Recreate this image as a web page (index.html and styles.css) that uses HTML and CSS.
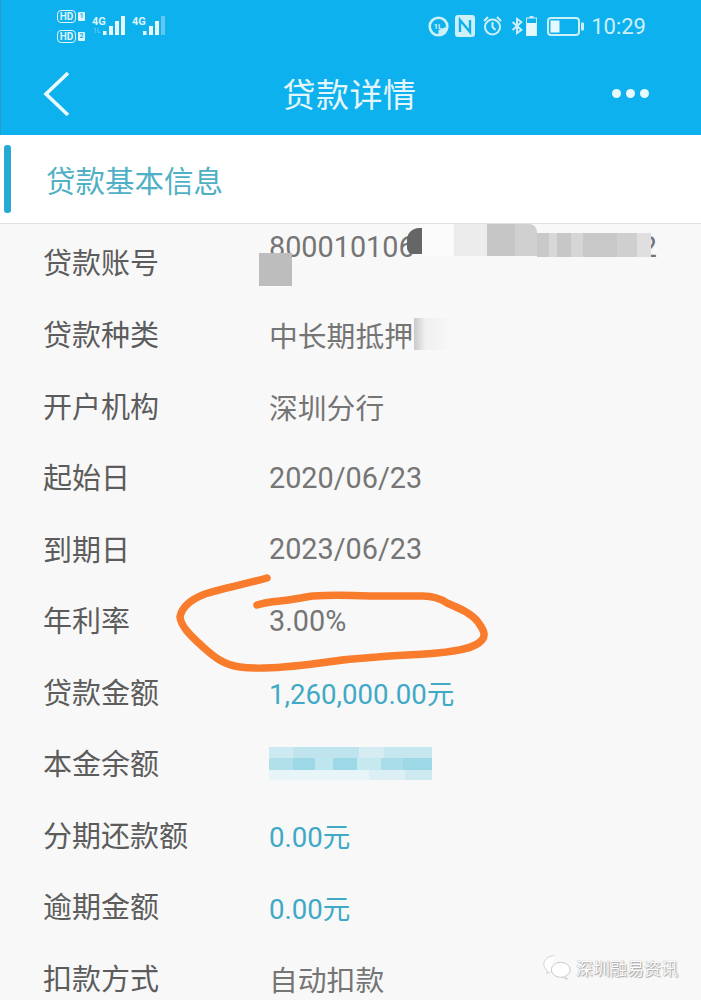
FILE: index.html
```html
<!DOCTYPE html>
<html lang="zh-CN">
<head>
    <meta charset="UTF-8">
    <meta name="viewport" content="width=device-width, initial-scale=1.0">
    <title>贷款详情</title>
    <link rel="stylesheet" href="styles.css">
</head>
<body>
    <div class="page">
        <!-- Status bar + title bar -->
        <header class="topbar">
            <div class="status">
                <div class="status-left">
                    <div class="hd-col">
                        <div class="hd-line"><span class="hd">HD</span><span class="sim">1</span></div>
                        <div class="hd-line"><span class="hd">HD</span><span class="sim">2</span></div>
                    </div>
                    <div class="signal">
                        <span class="net">4G</span>
                        <svg width="22" height="19" viewBox="0 0 22 19"><g fill="#e6f7fb"><rect x="0" y="15" width="3.500" height="4"/><rect x="6" y="10" width="4" height="9"/><rect x="12" y="5" width="4" height="14"/><rect x="18" y="0" width="4" height="19"/></g></svg>
                        <span class="net-sub">1L</span>
                    </div>
                    <div class="signal">
                        <span class="net">4G</span>
                        <svg width="22" height="19" viewBox="0 0 22 19"><rect x="0" y="15" width="3.500" height="4" fill="#e6f7fb"/><rect x="6" y="10" width="4" height="9" fill="#e6f7fb"/><rect x="12" y="5" width="4" height="14" fill="#e6f7fb"/><rect x="18" y="0" width="4" height="19" fill="#62c7ee"/></svg>
                    </div>
                </div>
                <div class="status-right">
                    <svg class="ic-eye" width="21" height="21" viewBox="0 0 21 21"><circle cx="10.500" cy="10.500" r="8.800" fill="none" stroke="#cdeff8" stroke-width="2.600"/><path d="M10.500 19.500a9 9 0 0 0 9-9l-9 3.500z" fill="#cdeff8"/><text x="5.500" y="13" font-size="8" font-weight="bold" fill="#cdeff8" font-family="Roboto, sans-serif">1L</text></svg>
                    <svg class="ic-nfc" width="20" height="22" viewBox="0 0 20 22"><rect width="20" height="22" rx="3" fill="#cdeff8"/><path d="M5 17V5l10 12V5" fill="none" stroke="#0db1ee" stroke-width="2.400"/></svg>
                    <svg class="ic-alarm" width="19" height="22" viewBox="0 0 19 22"><circle cx="9.500" cy="12" r="7.500" fill="none" stroke="#cdeff8" stroke-width="2"/><path d="M9.500 7v5l3 3M1 6l4-4M18 6l-4-4" fill="none" stroke="#cdeff8" stroke-width="2"/></svg>
                    <svg class="ic-bt" width="12" height="22" viewBox="0 0 15 22"><path d="M2 6l11 10-5.500 4V2L13 6 2 16" fill="none" stroke="#cdeff8" stroke-width="2.400"/></svg>
                    <svg class="ic-mini" width="11" height="20" viewBox="0 0 11 20"><rect x="3.500" y="0" width="4" height="2" fill="#cdeff8"/><rect x="0.500" y="2" width="10" height="17.500" fill="none" stroke="#cdeff8"/><rect x="1" y="7" width="9" height="12.500" fill="#e6f8fc"/></svg>
                    <svg class="ic-battery" width="37" height="19" viewBox="0 0 37 19"><rect x="1" y="1" width="31" height="17" rx="3" fill="none" stroke="#cdeff8" stroke-width="2"/><rect x="3.500" y="3.500" width="9" height="12" fill="#e6f8fc"/><rect x="34" y="5.500" width="3" height="8" rx="1" fill="#cdeff8"/></svg>
                    <span class="clock">10:29</span>
                </div>
            </div>
            <nav class="titlebar">
                <svg class="back" width="28" height="46" viewBox="0 0 28 46"><path d="M25 2L3 23l22 21" fill="none" stroke="#ecf9fd" stroke-width="3.600"/></svg>
                <h1 class="title">贷款详情</h1>
                <div class="more"><i></i><i></i><i></i></div>
            </nav>
        </header>

        <section class="section-head">
            <span class="marker"></span>
            <h2>贷款基本信息</h2>
        </section>

        <div class="rows">
            <div class="row row-first">
                <span class="label">贷款账号</span>
                <div class="value account">
                    <div class="account-line"><span>800010106</span><span>52</span></div>
                    <span class="mask mask-light"></span>
                    <span class="mask mask-dark"></span>
                    <span class="mask mask-grey"></span>
                    <span class="mask mask-stripes"></span>
                    <span class="mask mask-square"></span>
                </div>
            </div>
            <div class="row"><span class="label">贷款种类</span><span class="value">中长期抵押<span class="mask mask-type"></span></span></div>
            <div class="row"><span class="label">开户机构</span><span class="value">深圳分行</span></div>
            <div class="row"><span class="label">起始日</span><span class="value">2020/06/23</span></div>
            <div class="row"><span class="label">到期日</span><span class="value">2023/06/23</span></div>
            <div class="row"><span class="label">年利率</span><span class="value">3.00%</span></div>
            <div class="row"><span class="label">贷款金额</span><span class="value money">1,260,000.00元</span></div>
            <div class="row"><span class="label">本金余额</span><span class="value"><span class="mask-blue"></span></span></div>
            <div class="row"><span class="label">分期还款额</span><span class="value money">0.00元</span></div>
            <div class="row"><span class="label">逾期金额</span><span class="value money">0.00元</span></div>
            <div class="row"><span class="label">扣款方式</span><span class="value">自动扣款</span></div>
        </div>

        <!-- hand drawn circle around the rate -->
        <svg class="scribble" width="701" height="1000" viewBox="0 0 701 1000">
            <path d="M267 578C245 584 220 589 205 594C192 599 182 606 180 617C181 627 192 637 203 647C214 657 224 665 240 667C260 670 290 667 320 663C340 660 360 658 377 657C400 655 420 655 437 653C460 651 475 648 482 640C487 634 482 628 478 622C470 612 458 608 447 603C438 597 430 596 423 596L370 596C345 595 328 595 313 596C300 598 290 600 280 601C270 602 263 603 257 605" fill="none" stroke="#f97b2c" stroke-width="7.500" stroke-linecap="round" stroke-linejoin="round"/>
        </svg>

        <div class="watermark">
            <svg width="32" height="28" viewBox="0 0 34 28"><path d="M14 2C8 2 3 6 3 11c0 3 1.500 5 4 7l-1 3 4-2" fill="#fff" stroke="#d0d0d0"/><ellipse cx="21" cy="17" rx="10" ry="8" fill="#fff" stroke="#c4c4c4"/><path d="M26 24l2 3-5-2" fill="#fff" stroke="#c4c4c4"/></svg>
            <span>深圳融易资讯</span>
        </div>
    </div>
</body>
</html>
```

FILE: styles.css
```css
body {
    margin: 0;
    background-color: #f8f8f8;
    font-family: "Liberation Sans", "Noto Sans CJK SC", sans-serif;
}
.page {
    position: relative;
    width: 701px;
    height: 1000px;
    overflow: hidden;
    background-color: #f8f8f8;
}

/* top blue area */
.topbar {
    height: 135px;
    background-color: #0db1ee;
    box-sizing: border-box;
    border-left: 1px solid #2a9ccc;
}
.status {
    height: 52px;
    display: flex;
    justify-content: space-between;
    padding: 10px 55px 0 56px;
    box-sizing: border-box;
}
.status-left {
    display: flex;
    align-items: flex-start;
    gap: 7px;
}
.status-right {
    display: flex;
    align-items: center;
    height: 32px;
}
.hd-col {
    display: flex;
    flex-direction: column;
    gap: 7px;
}
.hd-line {
    display: flex;
    align-items: center;
    gap: 2px;
}
.hd {
    width: 17px;
    height: 11px;
    line-height: 11px;
    border: 1px solid #dff4fb;
    border-radius: 4px;
    color: #dff4fb;
    font-size: 10px;
    font-weight: bold;
    text-align: center;
    font-family: Roboto, sans-serif;
}
.sim {
    width: 7px;
    height: 9px;
    line-height: 9px;
    background-color: #dff4fb;
    color: #0db1ee;
    font-size: 7px;
    font-weight: bold;
    text-align: center;
    border-radius: 1px;
    font-family: Roboto, sans-serif;
}
.signal {
    position: relative;
    display: flex;
    margin-top: 6px;
}
.signal svg {
    display: block;
}
.net {
    width: 11px;
    color: #dff4fb;
    font-size: 11px;
    line-height: 11px;
    font-weight: bold;
    font-family: Roboto, sans-serif;
}
.net-sub {
    position: absolute;
    left: 1px;
    top: 12px;
    color: #7fd2f0;
    font-size: 7px;
    line-height: 7px;
    font-family: Roboto, sans-serif;
}
.ic-nfc {
    margin-left: 6px;
}
.ic-alarm {
    margin-left: 8px;
}
.ic-bt {
    margin-left: 9px;
}
.ic-mini {
    margin-left: 3px;
}
.ic-battery {
    margin-left: 10px;
}
.clock {
    margin-left: 7px;
    color: #cdeff8;
    font-size: 22px;
    font-family: Roboto, sans-serif;
}
.titlebar {
    height: 83px;
    display: flex;
    align-items: center;
    justify-content: space-between;
    padding: 0 52px 0 42px;
    box-sizing: border-box;
}
.back {
    display: block;
}
.title {
    margin: 0 0 0 16px;
    padding-bottom: 2px;
    color: #e4f6fb;
    font-size: 33px;
    font-weight: normal;
    letter-spacing: 0.500px;
}
.more {
    display: flex;
    gap: 5px;
}
.more i {
    width: 9px;
    height: 9px;
    border-radius: 50%;
    background-color: #e9f9fd;
}

/* section heading */
.section-head {
    position: relative;
    height: 89px;
    box-sizing: border-box;
    background-color: #fff;
    border-bottom: 1px solid #e2e2e2;
    display: flex;
    align-items: center;
    padding-left: 46px;
}
.section-head h2 {
    margin: 0 0 1px;
    color: #4fb0c5;
    font-size: 29.500px;
    font-weight: normal;
}
.marker {
    position: absolute;
    left: 4px;
    top: 10px;
    width: 7px;
    height: 68px;
    background-color: #26a9d4;
    border-radius: 3px;
}

/* detail rows */
.rows {
    padding-left: 43px;
}
.row {
    height: 71.500px;
    display: flex;
    align-items: center;
    font-size: 29px;
}
.row-first {
    height: 73.500px;
}
.label {
    width: 226px;
    flex-shrink: 0;
    color: #5c5c5c;
}
.value {
    position: relative;
    margin-top: 3px;
    color: #757575;
    font-size: 28.800px;
    font-family: Roboto, "Noto Sans CJK SC", sans-serif;
}
.money {
    color: #3fa9c6;
    font-size: 27.600px;
}
.account {
    width: 390px;
    height: 73.500px;
    margin-top: 0;
}
.account-line {
    display: flex;
    justify-content: space-between;
    margin-top: 6px;
    line-height: 34px;
    padding-right: 2px;
}

/* blurred out parts of the photo */
.mask {
    position: absolute;
    display: block;
}
.mask-light {
    left: 151px;
    top: 0;
    width: 68px;
    height: 32px;
    background: linear-gradient(90deg, #fbfbfb 0 34px, #ececec 34px);
}
.mask-dark {
    left: 138px;
    top: 4px;
    width: 15px;
    height: 26px;
    background-color: #666;
    border-radius: 12px 0 0 6px;
}
.mask-grey {
    left: 218px;
    top: 0;
    width: 50px;
    height: 32px;
    background: linear-gradient(90deg, #c6c6c6 0 28px, #d0d0d0 28px);
    border-radius: 0 8px 0 0;
}
.mask-stripes {
    left: 268px;
    top: 9px;
    width: 114px;
    height: 24px;
    background: linear-gradient(90deg, #c9c9c9 0 12px, #d8d8d8 12px 20px, #c7c7c7 20px 34px, #d6d6d6 34px 46px, #c8c8c8 46px 80px, #cfcfcf 80px 100px, #dfdfdf 100px);
}
.mask-square {
    left: -10px;
    top: 29px;
    width: 33px;
    height: 33px;
    background-color: #bdbdbd;
}
.mask-type {
    left: 145px;
    top: 4px;
    width: 38px;
    height: 32px;
    background: linear-gradient(90deg, #c9c9c9, #f0f0f0 30%, #f8f8f8);
}
.mask-blue {
    display: block;
    width: 163px;
    height: 33px;
    background:
        linear-gradient(90deg, #cde9f1 0 24px, #bfe4ee 24px 90px, #d4ecf2 90px 115px, #c6e7ef 115px) 0 0 / 100% 11px no-repeat,
        linear-gradient(90deg, #b2e0ea 0 24px, #9dd8e7 24px 46px, #bde6ee 46px 64px, #9dd8e7 64px 88px, #c6e9f0 88px 112px, #a9dde9 112px 134px, #9dd8e7 134px) 0 11px / 100% 12px no-repeat,
        linear-gradient(90deg, #e8f5f8 0 100px, #dceff4 100px 136px, #cfe9f0 136px) 0 23px / 100% 10px no-repeat;
}

/* overlays */
.scribble {
    position: absolute;
    left: 0;
    top: 0;
    pointer-events: none;
}
.watermark {
    position: absolute;
    right: 23px;
    top: 953px;
    display: flex;
    align-items: center;
    gap: 3px;
    color: #fff;
    font-size: 17px;
    text-shadow: 0 0 1px #888, 1px 1px 1px #aaa;
}
```
